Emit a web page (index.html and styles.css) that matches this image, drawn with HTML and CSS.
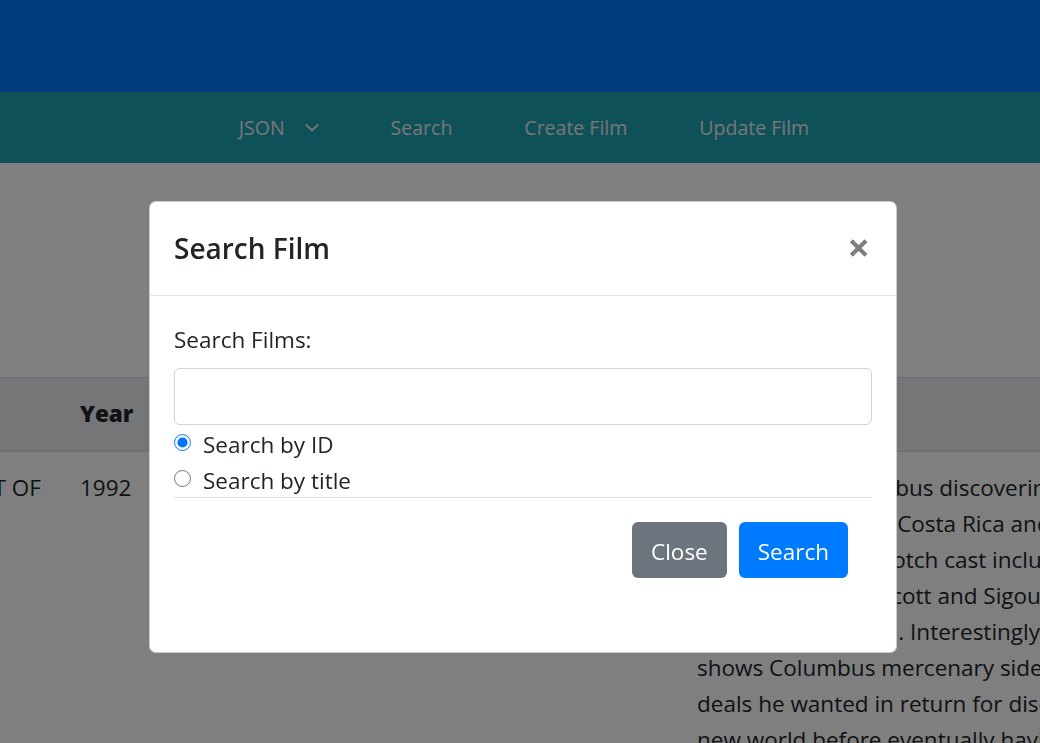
FILE: index.html
```html
<!DOCTYPE html>
<html lang="en">
<head>
<meta charset="utf-8">
<title>Films</title>
<link rel="stylesheet" href="styles.css">
</head>
<body>
<header class="top-banner"></header>
<nav class="main-nav">
  <ul class="nav-list">
    <li class="nav-item">JSON <svg class="chevron" width="14" height="9" viewBox="0 0 14 9"><polyline points="1,1.5 7,7.5 13,1.5" fill="none" stroke="currentColor" stroke-width="1.8"/></svg></li>
    <li class="nav-item">Search</li>
    <li class="nav-item">Create Film</li>
    <li class="nav-item">Update Film</li>
  </ul>
</nav>
<main class="content">
  <div class="table-wrap">
    <table class="film-table">
      <colgroup>
        <col class="c-title"><col class="c-year"><col class="c-rating"><col class="c-length"><col class="c-desc">
      </colgroup>
      <thead>
        <tr><th>Title</th><th>Year</th><th>Rating</th><th>Length</th><th>Description</th></tr>
      </thead>
      <tbody>
        <tr>
          <td class="nowrap">1492: CONQUEST OF<br>PARADISE</td>
          <td>1992</td>
          <td>PG-13</td>
          <td>154 min</td>
          <td class="nowrap">The story of Columbus discovering the new<br>world. All filmed in Costa Rica and<br>Spain, with a top-notch cast including<br>Depardieu, M. Wincott and Sigourney<br>Weaver, the Queen. Interestingly, it<br>shows Columbus mercenary side and the<br>deals he wanted in return for discovering the<br>new world before eventually having it all</td>
        </tr>
      </tbody>
    </table>
  </div>
</main>
<div class="backdrop"></div>
<div class="modal-layer">
  <div class="modal">
    <div class="modal-header">
      <h5 class="modal-title">Search Film</h5>
      <span class="modal-close">×</span>
    </div>
    <div class="modal-body">
      <label class="field-label" for="q">Search Films:</label>
      <input class="field-input" id="q" type="text">
      <div class="check"><input type="radio" name="by" id="byid" checked><label for="byid">Search by ID</label></div>
      <div class="check"><input type="radio" name="by" id="bytitle"><label for="bytitle">Search by title</label></div>
      <div class="modal-footer">
        <button class="btn btn-secondary">Close</button>
        <button class="btn btn-primary">Search</button>
      </div>
    </div>
  </div>
</div>
</body>
</html>
```
FILE: styles.css
```css
html, body {
  margin: 0;
  overflow: hidden;
}
body {
  font-family: "Open Sans", "Noto Sans", sans-serif;
  font-size: 22.5px;
  line-height: 36px;
  color: #212529;
  background: #fff;
  height: 743px;
}
.top-banner {
  height: 92px;
  background: #0078fc;
}
.main-nav {
  height: 71px;
  background: #1ca2b2;
  display: flex;
  justify-content: center;
  align-items: center;
  padding-left: 8px;
}
.nav-list {
  display: flex;
  list-style: none;
  margin: 0;
  padding: 0;
}
.nav-item {
  display: flex;
  align-items: center;
  gap: 20px;
  padding: 0 36px;
  font-size: 19.5px;
  color: #eeeeee;
}
.chevron {
  display: block;
}
.content {
  padding-top: 214px;
}
.table-wrap {
  display: flex;
  justify-content: center;
}
.film-table {
  flex: none;
  width: 1430px;
  table-layout: fixed;
  border-collapse: collapse;
}
.c-title { width: 257px; }
.c-year { width: 110px; }
.c-rating { width: 250px; }
.c-length { width: 257px; }
.film-table th,
.film-table td {
  padding: 18px;
  text-align: left;
  vertical-align: top;
  border-top: 1px solid #dee2e6;
}
.film-table thead th {
  background: #e9ecef;
  border-bottom: 2px solid #dee2e6;
  font-weight: 800;
  vertical-align: bottom;
}
.nowrap {
  white-space: nowrap;
}
.backdrop {
  position: fixed;
  inset: 0;
  background: rgba(0, 0, 0, 0.5);
}
.modal-layer {
  position: fixed;
  inset: 0;
  display: flex;
  justify-content: center;
  align-items: flex-start;
  padding-top: 201px;
  padding-left: 6px;
}
.modal {
  width: 748px;
  background: #fff;
  border: 1px solid rgba(0, 0, 0, 0.2);
  border-radius: 7px;
  box-sizing: border-box;
}
.modal-header {
  display: flex;
  align-items: flex-start;
  justify-content: space-between;
  padding: 24px;
  border-bottom: 1px solid #dee2e6;
}
.modal-title {
  margin: 0;
  font-size: 28px;
  font-weight: 600;
  line-height: 45px;
}
.modal-close {
  font-size: 40px;
  font-weight: 700;
  line-height: 41px;
  color: #000;
  opacity: 0.5;
  margin-right: 2px;
}
.modal-body {
  padding: 26px 24px 50px;
  display: flex;
  flex-direction: column;
}
.field-label {
  margin-bottom: 10px;
}
.field-input {
  height: 57px;
  box-sizing: border-box;
  border: 1px solid #ced4da;
  border-radius: 6px;
  font: inherit;
  padding: 9px 18px;
  margin-bottom: 2px;
}
.check {
  display: flex;
  align-items: flex-start;
  gap: 12px;
}
.check input {
  width: 17px;
  height: 17px;
  margin: 7px 0 0;
  accent-color: #0075ff;
}
.modal-footer {
  display: flex;
  justify-content: flex-end;
  gap: 12px;
  padding: 24px;
  border-top: 1px solid #dee2e6;
  margin-top: -2px;
}
.btn {
  font: inherit;
  color: #fff;
  border: 1px solid transparent;
  border-radius: 6px;
  padding: 11px 18px 7px;
  line-height: 36px;
}
.btn-secondary {
  background: #6c757d;
}
.btn-primary {
  background: #007bff;
}
```
